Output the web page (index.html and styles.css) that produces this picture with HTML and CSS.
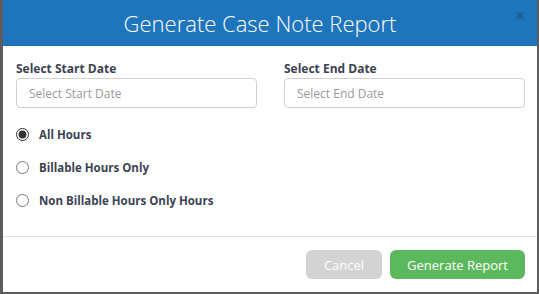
FILE: index.html
```html
<!DOCTYPE html>
<html lang="en">
<head>
    <meta charset="UTF-8">
    <meta name="viewport" content="width=device-width, initial-scale=1.0">
    <title>Generate Case Note Report</title>
    <link rel="stylesheet" href="styles.css">
</head>
<body>
    <div class="modal-content">
        <div class="modal-header">
            <span class="modal-close">&times;</span>
            <h2>Generate Case Note Report</h2>
        </div>
        <div class="modal-body">
            <div class="date-row">
                <div class="field">
                    <label>Select Start Date</label>
                    <input type="text" placeholder="Select Start Date">
                </div>
                <div class="field">
                    <label>Select End Date</label>
                    <input type="text" placeholder="Select End Date">
                </div>
            </div>
            <div class="radio-list">
                <label class="radio-item"><input type="radio" name="hours" checked> All Hours</label>
                <label class="radio-item"><input type="radio" name="hours"> Billable Hours Only</label>
                <label class="radio-item"><input type="radio" name="hours"> Non Billable Hours Only Hours</label>
            </div>
        </div>
        <div class="modal-footer">
            <button class="btn btn-cancel">Cancel</button>
            <button class="btn btn-generate">Generate Report</button>
        </div>
    </div>
</body>
</html>
```

FILE: styles.css
```css
body {
    font-family: 'Open Sans', 'Liberation Sans', sans-serif;
    background: #5c5c5c;
    margin: 0;
    padding: 0 2px 2px 3px;
    height: 294px;
    box-sizing: border-box;
    overflow: hidden;
}
.modal-content {
    background: #ffffff;
    height: 292px;
    display: flex;
    flex-direction: column;
}
.modal-header {
    background: #1e75bc;
    height: 46px;
    position: relative;
    display: flex;
    align-items: center;
    justify-content: center;
    padding-right: 20px;
}
.modal-header h2 {
    margin: 0;
    color: #ffffff;
    font-weight: 300;
    font-size: 22px;
    line-height: 1;
}
.modal-close {
    position: absolute;
    right: 12px;
    top: 4px;
    font-size: 17px;
    font-weight: bold;
    color: #1a5f96;
}
.modal-body {
    padding: 15px 12px 0 13px;
    flex: 1;
}
.date-row {
    display: flex;
    gap: 27px;
}
.field {
    flex: 1;
    display: flex;
    flex-direction: column;
}
.field label {
    font-size: 12px;
    font-weight: bold;
    color: #3b4252;
    line-height: 16px;
    margin-bottom: 1px;
}
.field input {
    height: 30px;
    border: 1px solid #d0d0d0;
    border-radius: 4px;
    padding: 0 12px;
    font-family: inherit;
    font-size: 12px;
    box-sizing: border-box;
}
.field input::placeholder {
    color: #9a9a9a;
}
.radio-list {
    display: flex;
    flex-direction: column;
    gap: 13px;
    margin-top: 16px;
}
.radio-item {
    display: flex;
    align-items: center;
    gap: 10px;
    font-size: 11.5px;
    font-weight: bold;
    color: #3b4252;
    height: 20px;
}
.radio-item input {
    margin: 0;
    width: 13px;
    height: 13px;
    accent-color: #333333;
}
.modal-footer {
    border-top: 1px solid #e5e5e5;
    height: 56px;
    display: flex;
    justify-content: flex-end;
    align-items: flex-start;
    gap: 8px;
    padding: 13px 12px 0 0;
    box-sizing: border-box;
}
.btn {
    height: 29px;
    border: none;
    border-radius: 6px;
    color: #ffffff;
    font-family: inherit;
    font-size: 13px;
    padding: 0 17px;
    white-space: nowrap;
}
.btn-cancel {
    background: #d3d3d3;
    padding: 0 18px;
}
.btn-generate {
    background: #5cb85c;
}
```
